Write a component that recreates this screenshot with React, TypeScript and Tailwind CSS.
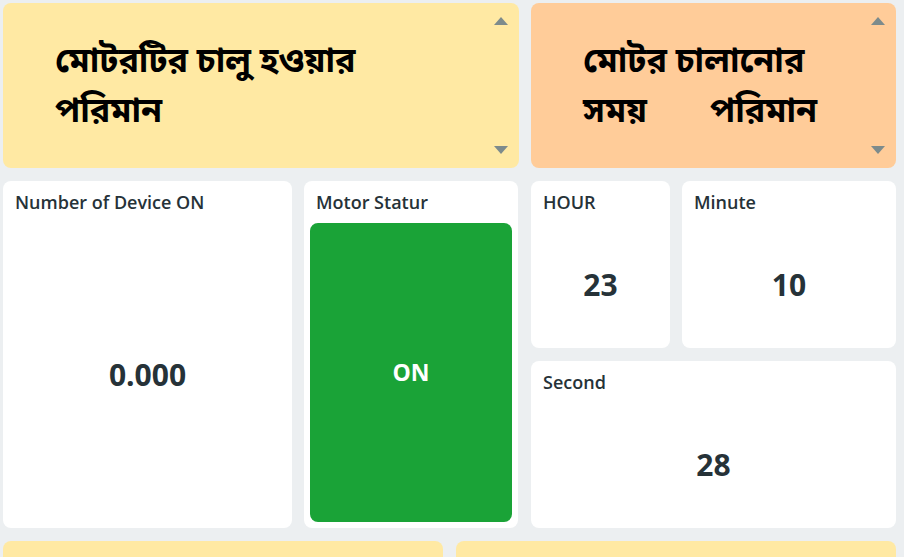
const bn = { fontFamily: '"Noto Sans Bengali", "Lohit Bengali", "Noto Serif Bengali", "FreeSans", "Vrinda", sans-serif' }
const ui = { fontFamily: '"Open Sans", "Noto Sans", sans-serif' }

function Arrows() {
  return (
    <div className="flex flex-col justify-between py-[14px] pr-[11px]">
      <div className="w-0 h-0 border-l-[7px] border-r-[7px] border-b-[8px] border-l-transparent border-r-transparent border-b-[#7d8b8c]" />
      <div className="w-0 h-0 border-l-[7px] border-r-[7px] border-t-[8px] border-l-transparent border-r-transparent border-t-[#7d8b8c]" />
    </div>
  )
}

function Banner({ color, children }: { color: string; children: React.ReactNode }) {
  return (
    <div className={`flex h-[165px] rounded-lg ${color}`}>
      <div
        className="flex-1 flex flex-col justify-center pl-[52px] pt-[6px] text-[34px] font-bold leading-[50px] text-black"
        style={bn}
      >
        {children}
      </div>
      <Arrows />
    </div>
  )
}

function Card({
  title,
  value,
  className,
}: {
  title: string
  value: string
  className: string
}) {
  return (
    <div className={`flex flex-col bg-white rounded-lg ${className}`} style={ui}>
      <div className="h-[42px] px-3 pt-[9px] text-[18px] leading-[24px] font-semibold text-[#263238]">
        {title}
      </div>
      <div className="flex-1 flex items-center justify-center pb-[2px] text-[30px] font-bold text-[#263238]">
        {value}
      </div>
    </div>
  )
}

export default function App() {
  return (
    <div className="w-[904px] h-[557px] overflow-hidden bg-[#eceff1] pl-[3px] pt-[3px]">
      <div className="flex gap-3">
        <div className="w-[516px]">
          <Banner color="bg-[#ffe9a3]">
            <div>মোটরটির চালু হওয়ার</div>
            <div>পরিমান</div>
          </Banner>
        </div>
        <div className="w-[365px]">
          <Banner color="bg-[#ffcc99]">
            <div>মোটর চালানোর</div>
            <div>
              সময়<span className="inline-block w-[63px]" />পরিমান
            </div>
          </Banner>
        </div>
      </div>

      <div className="flex mt-[13px] h-[347px]">
        <Card title="Number of Device ON" value="0.000" className="w-[289px]" />
        <div className="w-[214px] ml-3 flex flex-col bg-white rounded-lg" style={ui}>
          <div className="h-[42px] px-3 pt-[9px] text-[18px] leading-[24px] font-semibold text-[#263238]">
            Motor Statur
          </div>
          <div className="flex-1 mx-[6px] mb-[6px] rounded-lg bg-[#1aa337] flex items-center justify-center text-white text-[23px] font-bold">
            ON
          </div>
        </div>
        <div className="w-[365px] ml-[13px] flex flex-col gap-[13px]">
          <div className="flex gap-3 h-[167px]">
            <Card title="HOUR" value="23" className="w-[139px]" />
            <Card title="Minute" value="10" className="w-[214px]" />
          </div>
          <Card title="Second" value="28" className="h-[167px]" />
        </div>
      </div>

      <div className="flex gap-[13px] mt-[13px]">
        <div className="w-[440px] h-[60px] rounded-lg bg-[#ffe9a3]" />
        <div className="w-[440px] h-[60px] rounded-lg bg-[#ffe9a3]" />
      </div>
    </div>
  )
}
